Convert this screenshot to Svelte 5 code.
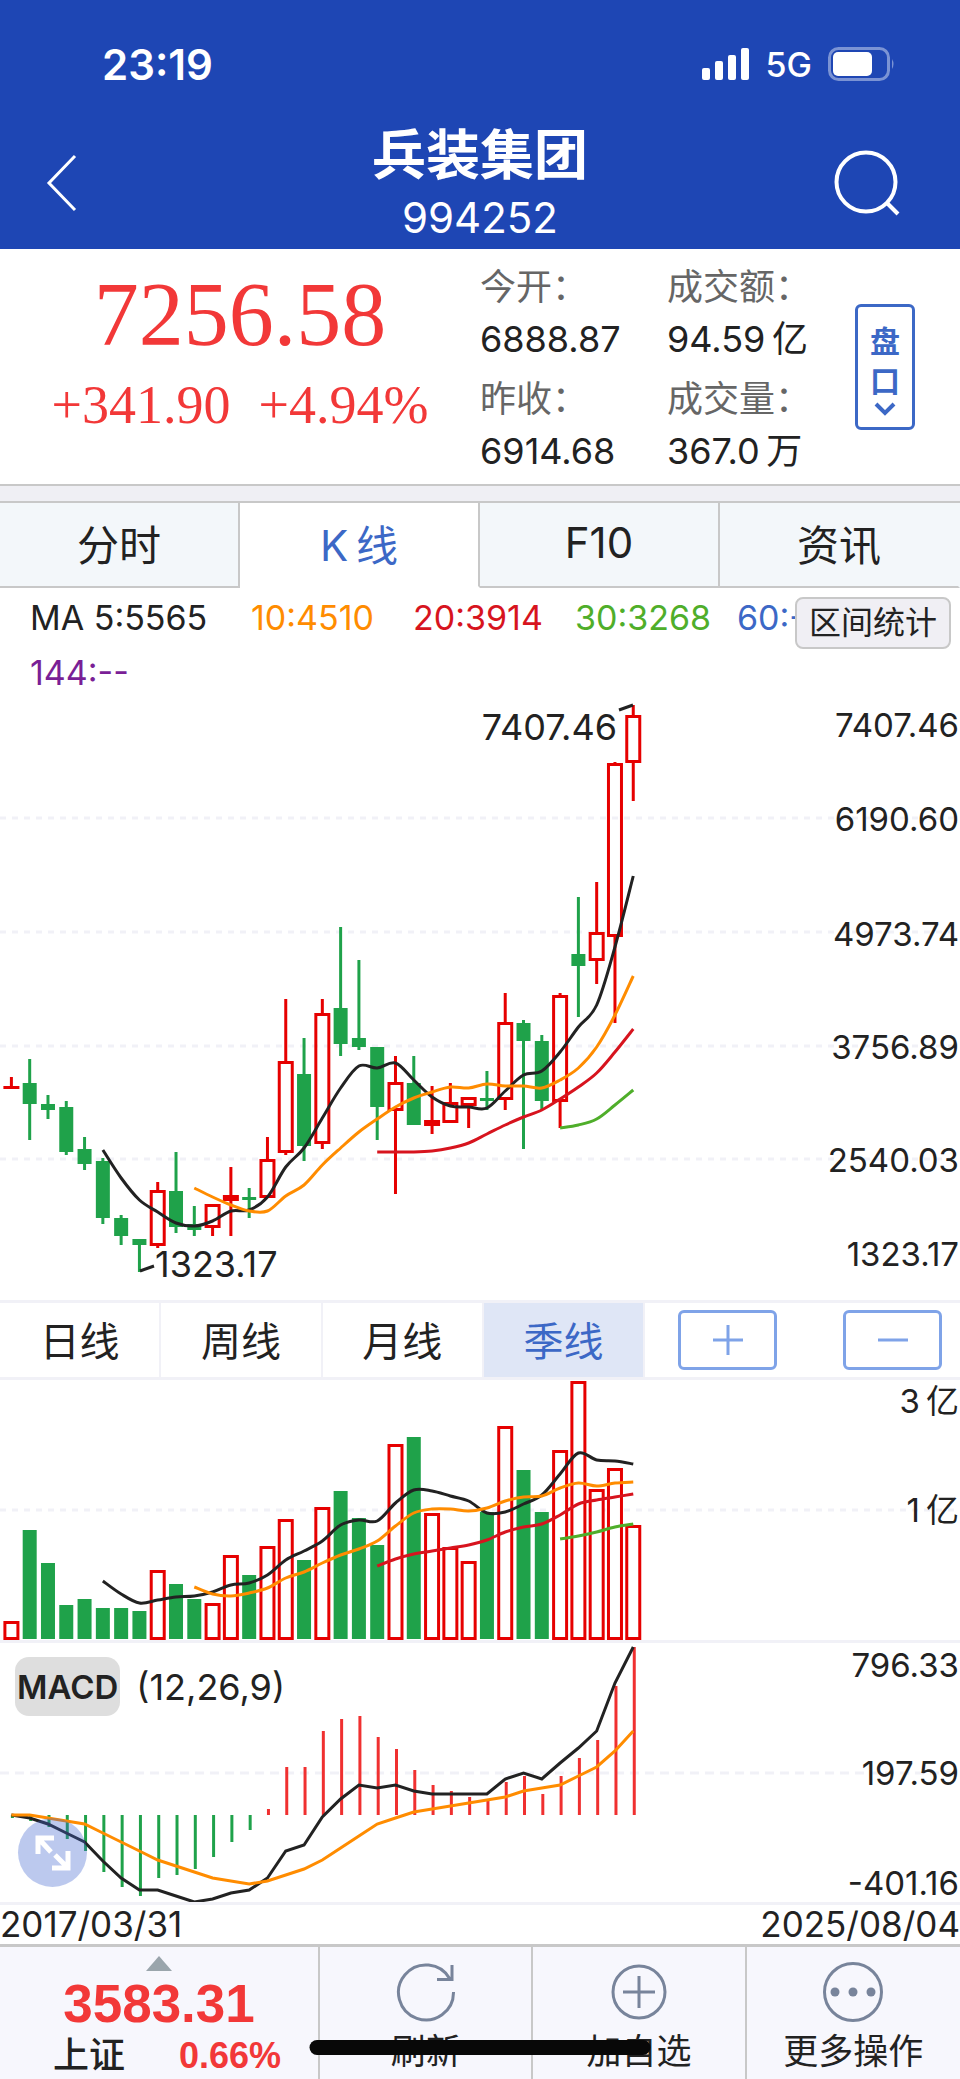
<!-- Stock quote page: header, quote summary, K-line, volume and MACD charts -->
<script>
  // Chart layout
  const FIRST_X = 11.4;
  const STEP = 18.29;
  const VOLUME_BASE = 1639;
  const MACD_BASE = 1815;

  const tabs = ['分时', 'K\u2009线', 'F10', '资讯'];
  const periods = ['日线', '周线', '月线', '季线'];

  let activeTab = tabs[1];
  let activePeriod = '季线';

  const quotes = [
    { label: '今开：', value: '6888.87' },
    { label: '成交额：', value: '94.59\u2009亿' },
    { label: '昨收：', value: '6914.68' },
    { label: '成交量：', value: '367.0\u2009万' },
  ];

  const averages = [
    { text: 'MA 5:5565', color: '#222222' },
    { text: '10:4510', color: '#ff8c00' },
    { text: '20:3914', color: '#d7141e' },
    { text: '30:3268', color: '#4fae2a' },
    { text: '60:--', color: '#3c68c6' },
    { text: '144:--', color: '#7a1f96' },
  ];

  // [up, high, body top, body bottom, low]
  const candles = [
    [1, 1077, 1086, 1089, 1089], [0, 1059, 1083, 1104, 1140], [0, 1095, 1104, 1110, 1119],
    [0, 1101, 1107, 1152, 1155], [0, 1137, 1149, 1164, 1170], [0, 1158, 1161, 1218, 1224],
    [0, 1215, 1218, 1236, 1245], [0, 1239, 1239, 1245, 1272], [1, 1182, 1190, 1246, 1248],
    [0, 1152, 1191, 1227, 1233], [0, 1206, 1224, 1230, 1236], [1, 1204, 1204, 1228, 1236],
    [1, 1167, 1195, 1201, 1236], [0, 1188, 1197, 1200, 1218], [1, 1137, 1159, 1198, 1198],
    [1, 999, 1061, 1153, 1155], [0, 1038, 1074, 1146, 1161], [1, 999, 1013, 1144, 1149],
    [0, 927, 1008, 1044, 1056], [0, 960, 1038, 1047, 1050], [0, 1047, 1047, 1107, 1140],
    [1, 1056, 1082, 1111, 1194], [0, 1056, 1083, 1125, 1125], [1, 1086, 1120, 1126, 1134],
    [1, 1083, 1102, 1123, 1123], [1, 1097, 1097, 1106, 1128], [0, 1071, 1098, 1101, 1110],
    [1, 993, 1022, 1100, 1110], [0, 1020, 1023, 1041, 1149], [0, 1035, 1041, 1101, 1110],
    [1, 993, 995, 1102, 1128], [0, 897, 954, 966, 1017], [1, 882, 932, 961, 984],
    [1, 762, 763, 937, 1023], [1, 705, 715, 763, 801],
  ];

  const priceLines = [
    { color: '#222222', start: 5, values: [1150, 1178, 1200, 1212, 1223, 1226, 1221, 1211, 1210, 1197, 1167, 1148, 1118, 1088, 1066, 1068, 1063, 1080, 1097, 1106, 1107, 1108, 1091, 1075, 1071, 1052, 1027, 1005, 947, 876] },
    { color: '#ff8c00', start: 10, values: [1188, 1197, 1205, 1211, 1211, 1196, 1185, 1165, 1148, 1132, 1119, 1107, 1098, 1092, 1087, 1088, 1084, 1086, 1086, 1088, 1080, 1068, 1047, 1015, 976] },
    { color: '#d7141e', start: 20, values: [1152, 1152, 1152, 1151, 1148, 1143, 1134, 1125, 1117, 1110, 1099, 1087, 1073, 1052, 1029] },
    { color: '#4fae2a', start: 30, values: [1128, 1125, 1119, 1105, 1090] },
  ];

  const volumes = [
    1621, 1530, 1563, 1605, 1599, 1608, 1608, 1611, 1570, 1584, 1599, 1603, 1555, 1575, 1546, 1519, 1560, 1507,
    1491, 1518, 1545, 1444, 1437, 1513, 1547, 1561, 1512, 1426, 1470, 1512, 1450, 1381, 1489, 1468, 1525,
  ];
  const risingVolumes = [0, 8, 11, 12, 14, 15, 17, 21, 23, 24, 25, 27, 30, 31, 32, 33, 34];

  const volumeLines = [
    { color: '#222222', start: 5, values: [1581, 1594, 1603, 1600, 1597, 1596, 1592, 1585, 1583, 1575, 1560, 1551, 1541, 1525, 1520, 1521, 1503, 1490, 1491, 1496, 1501, 1513, 1512, 1504, 1495, 1474, 1453, 1460, 1461, 1464] },
    { color: '#ff8c00', start: 10, values: [1587, 1594, 1596, 1593, 1588, 1578, 1572, 1563, 1555, 1549, 1541, 1526, 1513, 1509, 1509, 1511, 1508, 1501, 1497, 1496, 1488, 1483, 1486, 1483, 1482] },
    { color: '#d7141e', start: 20, values: [1566, 1559, 1554, 1551, 1548, 1545, 1540, 1532, 1527, 1524, 1515, 1504, 1500, 1497, 1494] },
    { color: '#4fae2a', start: 30, values: [1539, 1536, 1532, 1527, 1524] },
  ];

  const macd = [
    1818, 1821, 1827, 1839, 1851, 1872, 1887, 1896, 1878, 1875, 1869, 1857, 1842, 1830, 1809, 1767, 1767, 1731,
    1719, 1716, 1737, 1749, 1770, 1785, 1791, 1797, 1801, 1782, 1776, 1794, 1776, 1758, 1740, 1686, 1647,
  ];
  const dif = [
    1815, 1818, 1824, 1833, 1842, 1861, 1878, 1890, 1890, 1896, 1902, 1899, 1893, 1890, 1878, 1851, 1845, 1817,
    1799, 1785, 1788, 1785, 1791, 1794, 1794, 1794, 1794, 1779, 1773, 1779, 1763, 1748, 1731, 1683, 1647,
  ];
  const dea = [
    1815, 1815, 1818, 1821, 1824, 1833, 1842, 1851, 1860, 1866, 1872, 1878, 1881, 1884, 1881, 1875, 1869, 1860,
    1848, 1836, 1824, 1818, 1812, 1809, 1806, 1803, 1800, 1797, 1791, 1788, 1785, 1776, 1767, 1751, 1731,
  ];

  const priceAxis = [
    { y: 725, text: '7407.46' },
    { y: 819, text: '6190.60', grid: 818 },
    { y: 934, text: '4973.74', grid: 932 },
    { y: 1047, text: '3756.89', grid: 1046 },
    { y: 1160, text: '2540.03', grid: 1159 },
    { y: 1254, text: '1323.17' },
  ];

  const xAt = (i) => FIRST_X + i * STEP;

  // Smooth path through the points (Catmull-Rom)
  function curve({ start, values }) {
    const p = values.map((y, i) => [xAt(start + i), y]);
    let d = `M${p[0][0]} ${p[0][1]}`;
    for (let i = 0; i < p.length - 1; i++) {
      const a = p[i - 1] || p[i];
      const b = p[i];
      const c = p[i + 1];
      const e = p[i + 2] || c;
      d += ` C${b[0] + (c[0] - a[0]) / 6} ${b[1] + (c[1] - a[1]) / 6} ${c[0] - (e[0] - b[0]) / 6} ${c[1] - (e[1] - b[1]) / 6} ${c[0]} ${c[1]}`;
    }
    return d;
  }

  const polyline = (values) => values.map((y, i) => `${xAt(i)},${y}`).join(' ');
</script>

<div class="page">
  <header>
    <div class="status">
      <span class="time">23:19</span>
      <div class="signals">
        <svg width="48" height="32" viewBox="0 0 48 32" fill="#fff" aria-hidden="true">
          <rect x="0" y="20" width="8" height="12" rx="2" />
          <rect x="13" y="13" width="8" height="19" rx="2" />
          <rect x="26" y="7" width="8" height="25" rx="2" />
          <rect x="39" y="0" width="8" height="32" rx="2" />
        </svg>
        <span class="network">5G</span>
        <svg width="68" height="34" viewBox="0 0 68 34" aria-hidden="true">
          <rect x="1.5" y="1.5" width="59" height="31" rx="9" fill="none" stroke="#7b93d4" stroke-width="3" />
          <rect x="5" y="5" width="39" height="24" rx="5" fill="#fff" />
          <path d="M64 12 q3 5 0 10z" fill="#7b93d4" />
        </svg>
      </div>
    </div>
    <div class="nav">
      <button type="button" class="icon-btn" aria-label="返回">
        <svg width="64" height="64" viewBox="0 0 64 64" fill="none" stroke="#fff" stroke-width="3">
          <path d="M45 6 L19 33 L45 60" />
        </svg>
      </button>
      <div class="title">
        <h1>兵装集团</h1>
        <span>994252</span>
      </div>
      <button type="button" class="icon-btn" aria-label="搜索">
        <svg width="68" height="68" viewBox="0 0 68 68" fill="none" stroke="#fff" stroke-width="4">
          <circle cx="34" cy="34" r="29.5" />
          <path d="M54 54 L66 66" />
        </svg>
      </button>
    </div>
  </header>

  <section class="quote">
    <div class="price">
      <strong>7256.58</strong>
      <div class="change"><span>+341.90</span><span>+4.94%</span></div>
    </div>
    <dl>
      {#each quotes as quote}
        <div>
          <dt>{quote.label}</dt>
          <dd>{quote.value}</dd>
        </div>
      {/each}
    </dl>
    <button type="button" class="depth">
      <span>盘</span>
      <span>口</span>
      <svg width="22" height="16" viewBox="0 0 22 16" fill="none" stroke="#3c68c6" stroke-width="4" aria-hidden="true">
        <path d="M2 3 L11 12 L20 3" />
      </svg>
    </button>
  </section>

  <div class="strip"></div>

  <nav class="tabs">
    {#each tabs as tab}
      <button type="button" class:active={tab === activeTab} on:click={() => (activeTab = tab)}>{tab}</button>
    {/each}
  </nav>

  <section class="legend">
    {#each averages as item}
      <span style="color: {item.color}">{item.text}</span>
    {/each}
    <button type="button" class="range-btn">区间统计</button>
  </section>

  <!-- K-line chart -->
  <svg class="chart" viewBox="0 700 960 600">
    {#each priceAxis as tick}
      {#if tick.grid}
        <line class="grid" x1="0" x2="960" y1={tick.grid} y2={tick.grid} />
      {/if}
      <text class="axis" x="959" y={tick.y + 12} text-anchor="end">{tick.text}</text>
    {/each}
    {#each candles as [up, high, top, bottom, low], i}
      {#if up}
        <path class="up" d="M{xAt(i)} {high}V{top} M{xAt(i)} {bottom}V{low}" />
        {#if bottom - top > 6}
          <rect class="up" x={xAt(i) - 6.5} y={top + 1.5} width="13" height={bottom - top - 3} />
        {:else}
          <rect x={xAt(i) - 8} y={top} width="16" height={bottom - top} fill="#e60000" />
        {/if}
      {:else}
        <line class="down" x1={xAt(i)} x2={xAt(i)} y1={high} y2={low} />
        <rect x={xAt(i) - 7} y={top} width="14" height={bottom - top} fill="#1fa24a" />
      {/if}
    {/each}
    {#each priceLines as line}
      <path class="line" d={curve(line)} stroke={line.color} />
    {/each}
    <path class="line" d="M140 1271 L154 1266 M619 710 L633 705" stroke="#222222" />
    <text class="mark" x="155" y="1277">1323.17</text>
    <text class="mark" x="617" y="740" text-anchor="end">7407.46</text>
  </svg>

  <div class="periods">
    {#each periods as period}
      <button type="button" class="period" class:active={period === activePeriod} on:click={() => (activePeriod = period)}>
        {period}
      </button>
    {/each}
    <div class="zoom">
      <button type="button" aria-label="放大">
        <svg width="32" height="32" viewBox="0 0 32 32" stroke="#7fa3e8" stroke-width="3"><path d="M1 16H31M16 1V31" /></svg>
      </button>
      <button type="button" aria-label="缩小">
        <svg width="32" height="32" viewBox="0 0 32 32" stroke="#7fa3e8" stroke-width="3"><path d="M1 16H31" /></svg>
      </button>
    </div>
  </div>

  <!-- Volume chart -->
  <svg class="chart" viewBox="0 1380 960 260">
    <line class="grid" x1="0" x2="960" y1="1510" y2="1510" />
    <text class="axis" x="959" y="1413" text-anchor="end">3&thinsp;亿</text>
    <text class="axis" x="959" y="1522" text-anchor="end">1&thinsp;亿</text>
    {#each volumes as top, i}
      {#if risingVolumes.includes(i)}
        <rect class="up hollow" x={xAt(i) - 6.5} y={top + 1.5} width="13" height={VOLUME_BASE - top - 2} />
      {:else}
        <rect x={xAt(i) - 7} y={top} width="14" height={VOLUME_BASE - top} fill="#1fa24a" />
      {/if}
    {/each}
    {#each volumeLines as line}
      <path class="line" d={curve(line)} stroke={line.color} />
    {/each}
  </svg>

  <!-- MACD chart -->
  <div class="macd">
    <svg class="chart" viewBox="0 1643 960 259">
      <line class="grid wide" x1="0" x2="960" y1="1773" y2="1773" />
      <text class="axis" x="959" y="1677" text-anchor="end">796.33</text>
      <text class="axis" x="959" y="1785" text-anchor="end">197.59</text>
      <text class="axis" x="959" y="1895" text-anchor="end">-401.16</text>
      {#each macd as y, i}
        <line x1={xAt(i) + 1} x2={xAt(i) + 1} y1={MACD_BASE} y2={y} stroke={y < MACD_BASE ? '#f03030' : '#1fa24a'} stroke-width="3" />
      {/each}
      <polyline class="line" points={polyline(dif)} stroke="#222222" />
      <polyline class="line" points={polyline(dea)} stroke="#ff8c00" />
    </svg>
    <div class="macd-head">
      <button type="button">MACD</button>
      <span>(12,26,9)</span>
    </div>
    <button type="button" class="expand" aria-label="全屏">
      <svg width="36" height="38" viewBox="0 0 36 38" fill="none" stroke="#fff" stroke-width="5">
        <path d="M19 4H3V20 M4 5L16 18 M17 34H33V17 M32 33L20 21" />
      </svg>
    </button>
  </div>

  <div class="dates">
    <time>2017/03/31</time>
    <time>2025/08/04</time>
  </div>

  <footer>
    <button type="button" class="index">
      <svg width="26" height="15" viewBox="0 0 26 15" aria-hidden="true"><path d="M13 0L26 15H0z" fill="#9aa5ac" /></svg>
      <strong>3583.31</strong>
      <span class="index-row"><b>上证</b><em>0.66%</em></span>
    </button>
    <button type="button">
      <svg width="60" height="60" viewBox="0 0 60 60" fill="none" stroke="#78849b" stroke-width="3" aria-hidden="true">
        <path d="M57.500 30A27.500 27.500 0 1 1 54 17 M56 3V17.500H41" />
      </svg>
      刷新
    </button>
    <button type="button">
      <svg width="60" height="60" viewBox="0 0 60 60" fill="none" stroke="#78849b" stroke-width="3" aria-hidden="true">
        <circle cx="30" cy="30" r="26" />
        <path d="M14 30H46M30 14V46" />
      </svg>
      加自选
    </button>
    <button type="button">
      <svg width="60" height="60" viewBox="0 0 60 60" fill="none" stroke="#78849b" stroke-width="3" aria-hidden="true">
        <circle cx="30" cy="30" r="28.500" />
        <g fill="#78849b" stroke="none">
          <circle cx="12" cy="30" r="4.500" />
          <circle cx="30" cy="30" r="4.500" />
          <circle cx="48" cy="30" r="4.500" />
        </g>
      </svg>
      更多操作
    </button>
    <div class="home-indicator"></div>
  </footer>
</div>

<style>
  :global(body) {
    margin: 0;
    background: #fff;
  }

  .page {
    font-family: Inter, 'Noto Sans CJK SC', sans-serif;
    color: #222;
    background: #fff;
  }

  button {
    box-sizing: border-box;
    padding: 0;
    border: none;
    background: none;
    font: inherit;
    color: inherit;
    cursor: pointer;
  }

  svg {
    display: block;
  }

  header {
    background: #1e46b4;
    color: #fff;
    padding: 40px 0 9px;
  }

  .status {
    display: flex;
    justify-content: space-between;
    align-items: center;
    height: 48px;
    padding: 0 64px 0 102px;
  }

  .time {
    font-size: 42px;
    font-weight: 600;
  }

  .signals {
    display: flex;
    align-items: center;
    gap: 16px;
  }

  .network {
    font-size: 34px;
    font-weight: 500;
  }

  .nav {
    display: flex;
    justify-content: space-between;
    align-items: center;
    box-sizing: border-box;
    height: 152px;
    padding: 36px 60px 0 30px;
  }

  .title {
    display: flex;
    flex-direction: column;
    align-items: center;
    margin-left: 34px;
    font-size: 42px;
    line-height: 52px;
  }

  h1 {
    margin: 0;
    font-size: 54px;
    font-weight: 700;
    line-height: 72px;
  }

  .quote {
    display: flex;
    align-items: center;
    height: 235px;
    border-bottom: 2px solid #c8c8c8;
  }

  .price {
    width: 480px;
    padding-bottom: 24px;
    font-family: 'Liberation Serif', serif;
    color: #f23838;
    text-align: center;
  }

  .price strong {
    display: block;
    font-size: 90px;
    font-weight: 400;
    line-height: 100px;
  }

  .change {
    display: flex;
    justify-content: center;
    gap: 28px;
    font-size: 54px;
    line-height: 80px;
  }

  dl {
    flex: 1;
    display: grid;
    grid-template-columns: 187px 1fr;
    margin: 0;
    padding-top: 12px;
    font-size: 36px;
    line-height: 52px;
  }

  dl div {
    height: 112px;
  }

  dt {
    color: #666;
  }

  dd {
    margin: 0;
    white-space: nowrap;
  }

  .depth {
    display: flex;
    flex-direction: column;
    align-items: center;
    width: 60px;
    height: 126px;
    margin-right: 45px;
    padding-top: 14px;
    border: 3px solid #3c68c6;
    border-radius: 6px;
    color: #3c68c6;
    font-size: 30px;
    font-weight: 700;
    line-height: 40px;
  }

  .strip {
    height: 15px;
    background: #efeff4;
  }

  .tabs {
    display: flex;
    border-top: 2px solid #c8c8c8;
  }

  .tabs button {
    flex: 1 1 0;
    height: 85px;
    padding-bottom: 4px;
    border-right: 2px solid #c8c8c8;
    border-bottom: 2px solid #c8c8c8;
    background: #f3f7fa;
    font-size: 42px;
  }

  .tabs button:last-child {
    border-right-color: #f3f7fa;
  }

  .tabs button.active {
    background: #fff;
    border-bottom-color: #fff;
    color: #3c68c6;
  }

  .legend {
    position: relative;
    display: grid;
    grid-template-columns: 221px repeat(3, 162px) 1fr;
    padding: 2px 164px 0 30px;
    font-size: 34px;
    line-height: 55px;
  }

  .legend span {
    min-width: 0;
    overflow: hidden;
    white-space: nowrap;
  }

  .range-btn {
    position: absolute;
    top: 9px;
    right: 9px;
    padding: 0 12px;
    border: 2px solid #c8c8c8;
    border-radius: 8px;
    background: #f0eff4;
    font-size: 32px;
    line-height: 48px;
  }

  .chart {
    width: 100%;
    height: auto;
  }

  .grid {
    stroke: #f1f1f7;
    stroke-width: 3;
    stroke-dasharray: 6 6;
  }

  .grid.wide {
    stroke-dasharray: 9 6;
  }

  .axis {
    font-size: 33px;
    fill: #222;
  }

  .mark {
    font-size: 36px;
    fill: #222;
  }

  .up {
    fill: none;
    stroke: #e60000;
    stroke-width: 3;
  }

  .up.hollow {
    fill: #fff;
  }

  .down {
    stroke: #1fa24a;
    stroke-width: 3;
  }

  .line {
    fill: none;
    stroke-width: 3;
  }

  .periods {
    display: grid;
    grid-template-columns: repeat(4, 16.8%) 1fr;
    height: 74px;
    border-top: 3px solid #f1f1f7;
    border-bottom: 3px solid #f1f1f7;
  }

  .period {
    padding-bottom: 2px;
    border-right: 2px solid #f1f1f7;
    font-size: 40px;
  }

  .period.active {
    background: #dfe6f6;
    color: #3c68c6;
  }

  .zoom {
    display: flex;
    justify-content: space-between;
    align-items: center;
    padding: 0 18px 0 33px;
  }

  .zoom button {
    display: flex;
    justify-content: center;
    align-items: center;
    width: 99px;
    height: 60px;
    border: 3px solid #7fa3e8;
    border-radius: 6px;
  }

  .macd {
    position: relative;
    border-top: 3px solid #f1f1f7;
    border-bottom: 3px solid #f1f1f7;
  }

  .macd-head {
    position: absolute;
    top: 14px;
    left: 15px;
    display: flex;
    align-items: center;
    gap: 16px;
    font-size: 36px;
  }

  .macd-head button {
    height: 59px;
    padding: 0 2px;
    border-radius: 14px;
    background: #dedede;
    font-size: 33px;
    font-weight: 600;
  }

  .expand {
    position: absolute;
    left: 18px;
    bottom: 15px;
    display: flex;
    justify-content: center;
    align-items: center;
    width: 69px;
    height: 69px;
    border-radius: 50%;
    background: rgba(62, 101, 205, 0.35);
  }

  .dates {
    display: flex;
    justify-content: space-between;
    font-size: 35px;
    line-height: 39px;
  }

  footer {
    position: relative;
    display: grid;
    grid-template-columns: 3fr 2fr 2fr 2fr;
    height: 132px;
    border-top: 3px solid #c8c8c8;
    background: #f7f7fd;
  }

  footer button {
    display: flex;
    flex-direction: column;
    align-items: center;
    padding-top: 15px;
    border-right: 2px solid #c8c8c8;
    font-size: 35px;
    line-height: 58px;
  }

  footer button:nth-child(4) {
    border-right: none;
  }

  footer .index {
    padding-top: 9px;
    color: #f23838;
    font-family: 'Liberation Sans', 'Noto Sans CJK SC', sans-serif;
  }

  .index strong {
    font-size: 53px;
    line-height: 66px;
  }

  .index-row {
    display: flex;
    gap: 54px;
    margin-left: 16px;
    font-size: 36px;
    line-height: 38px;
  }

  .index-row b {
    color: #222;
    font-weight: 500;
  }

  .index-row em {
    font-style: normal;
    font-weight: 700;
  }

  .home-indicator {
    position: absolute;
    left: 50%;
    bottom: 24px;
    width: 341px;
    height: 15px;
    border-radius: 8px;
    background: #080808;
    transform: translateX(-50%);
  }
</style>
